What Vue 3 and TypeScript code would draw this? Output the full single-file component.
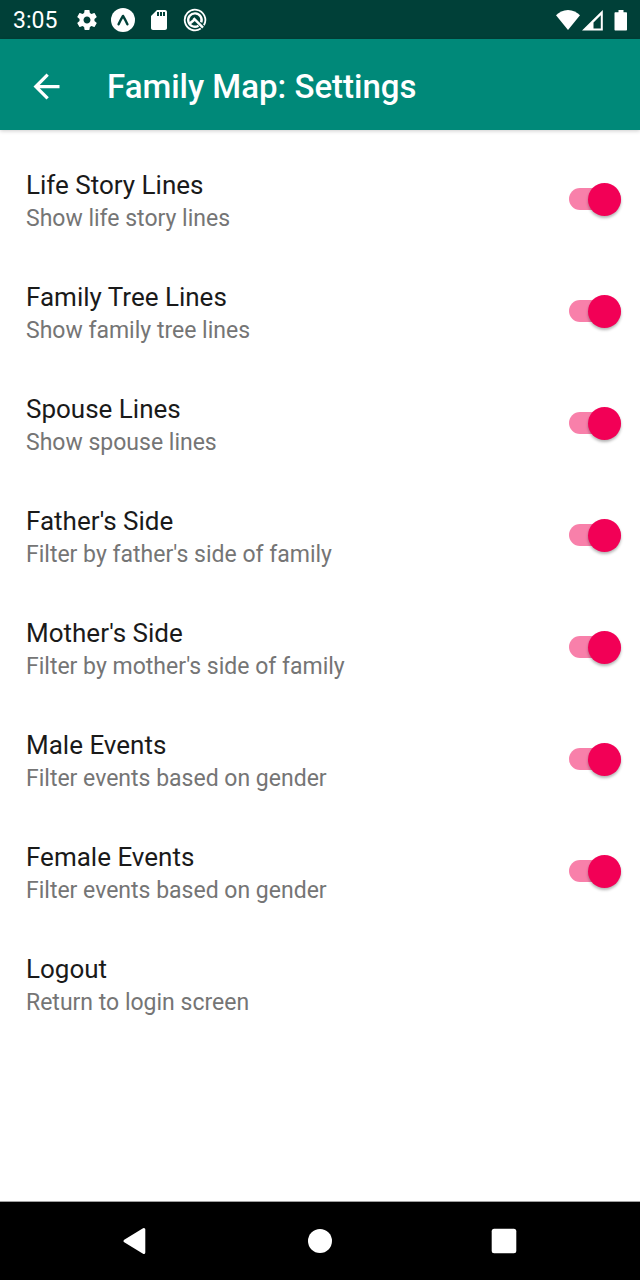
<script setup lang="ts">
import { ref } from 'vue'

interface Preference {
  id: string
  title: string
  summary: string
  enabled: boolean
}

const preferences = ref<Preference[]>([
  { id: 'life-story', title: 'Life Story Lines', summary: 'Show life story lines', enabled: true },
  { id: 'family-tree', title: 'Family Tree Lines', summary: 'Show family tree lines', enabled: true },
  { id: 'spouse', title: 'Spouse Lines', summary: 'Show spouse lines', enabled: true },
  { id: 'father', title: "Father's Side", summary: "Filter by father's side of family", enabled: true },
  { id: 'mother', title: "Mother's Side", summary: "Filter by mother's side of family", enabled: true },
  { id: 'male', title: 'Male Events', summary: 'Filter events based on gender', enabled: true },
  { id: 'female', title: 'Female Events', summary: 'Filter events based on gender', enabled: true },
])
</script>

<template>
  <div class="screen">
    <div class="status-bar">
      <span class="clock">3:05</span>
      <div class="status-icons">
        <svg width="24" height="24" viewBox="0 0 24 24" aria-hidden="true">
          <path fill="#fff" d="M19.43 12.98c.04-.32.07-.64.07-.98s-.03-.66-.07-.98l2.11-1.65c.19-.15.24-.42.12-.64l-2-3.46c-.12-.22-.39-.3-.61-.22l-2.49 1c-.52-.4-1.08-.73-1.69-.98l-.38-2.65C14.46 2.18 14.25 2 14 2h-4c-.25 0-.46.18-.49.42l-.38 2.65c-.61.25-1.17.59-1.69.98l-2.49-1c-.23-.09-.49 0-.61.22l-2 3.46c-.13.22-.07.49.12.64l2.11 1.65c-.04.32-.07.65-.07.98s.03.66.07.98l-2.11 1.65c-.19.15-.24.42-.12.64l2 3.46c.12.22.39.3.61.22l2.49-1c.52.4 1.08.73 1.69.98l.38 2.65c.03.24.24.42.49.42h4c.25 0 .46-.18.49-.42l.38-2.65c.61-.25 1.17-.59 1.69-.98l2.49 1c.23.09.49 0 .61-.22l2-3.46c.12-.22.07-.49-.12-.64l-2.11-1.65zM12 15.5c-1.93 0-3.5-1.57-3.5-3.5s1.57-3.5 3.5-3.5 3.5 1.57 3.5 3.5-1.57 3.5-3.5 3.5z" />
        </svg>
        <svg width="24" height="24" viewBox="0 0 24 24" aria-hidden="true">
          <circle cx="12" cy="12" r="12" fill="#fff" />
          <path fill="none" stroke="#004038" stroke-width="2.400" stroke-linecap="round" stroke-linejoin="round" d="M7.600 16.300C9 13.200 10.500 10.400 12 7.900c1.500 2.500 3 5.300 4.400 8.400" />
        </svg>
        <svg width="24" height="24" viewBox="0 0 24 24" aria-hidden="true">
          <path fill="#fff" d="M18 2h-8L4.020 8 4 20c0 1.100.9 2 2 2h12c1.100 0 2-.9 2-2V4c0-1.100-.9-2-2-2zm-6 6h-2V4h2v4zm3 0h-2V4h2v4zm3 0h-2V4h2v4z" />
        </svg>
        <svg width="24" height="24" viewBox="0 0 24 24" fill="none" stroke="#fff" aria-hidden="true">
          <path stroke-width="1.800" d="M17.800 20.500A10.300 10.300 0 1 1 20.900 17.200" />
          <path stroke-width="2.400" d="M15.500 17.700A6.700 6.700 0 1 1 18.200 14.400" />
          <path stroke-width="2.400" d="M10.500 10.200L20 19.600" />
          <path stroke-width="2.600" d="M6.800 15.500L11.600 11.600" />
        </svg>
      </div>
      <div class="signal-icons">
        <svg width="24" height="24" viewBox="0 0 24 24" aria-hidden="true">
          <path fill="#fff" d="M12 22L0 7.200C3 4.300 7.200 2 12 2s9 2.300 12 5.200z" />
        </svg>
        <svg class="cell" width="22" height="24" viewBox="0 0 22 24" aria-hidden="true">
          <path fill="#fff" fill-rule="evenodd" d="M0 22.500L20.800 2v20.500zM11.500 20.500h7.300V7.200L11.500 14.500z" />
        </svg>
        <svg width="14" height="24" viewBox="0 0 14 24" aria-hidden="true">
          <path fill="#fff" d="M4.500 2h5v2.200H12c.6 0 1 .4 1 1v16.300c0 .6-.4 1-1 1H1.500c-.6 0-1-.4-1-1V5.200c0-.6.4-1 1-1h3z" />
        </svg>
      </div>
    </div>

    <header class="app-bar">
      <button class="back" type="button" aria-label="Navigate up">
        <svg width="39" height="39" viewBox="0 0 24 24" aria-hidden="true">
          <path fill="#fff" d="M20 11H7.830l5.590-5.590L12 4l-8 8 8 8 1.410-1.410L7.830 13H20v-2z" />
        </svg>
      </button>
      <h1>Family Map: Settings</h1>
    </header>

    <main class="preferences">
      <label v-for="item in preferences" :key="item.id" class="row" :for="item.id">
        <span class="labels">
          <span class="title">{{ item.title }}</span>
          <span class="summary">{{ item.summary }}</span>
        </span>
        <input :id="item.id" v-model="item.enabled" class="switch" type="checkbox" role="switch" />
      </label>
      <button class="row" type="button">
        <span class="labels">
          <span class="title">Logout</span>
          <span class="summary">Return to login screen</span>
        </span>
      </button>
    </main>

    <nav class="nav-bar">
      <button type="button" aria-label="Back">
        <svg width="28" height="28" viewBox="0 0 28 28" aria-hidden="true">
          <path fill="#fff" stroke="#fff" stroke-width="3" stroke-linejoin="round" d="M3 14L21.800 2.600v22.800z" />
        </svg>
      </button>
      <button type="button" aria-label="Home">
        <svg width="28" height="28" viewBox="0 0 28 28" aria-hidden="true">
          <circle cx="14" cy="14" r="12" fill="#fff" />
        </svg>
      </button>
      <button type="button" aria-label="Overview">
        <svg width="28" height="28" viewBox="0 0 28 28" aria-hidden="true">
          <rect x="1.700" y="1.700" width="24.600" height="24.600" rx="2.500" fill="#fff" />
        </svg>
      </button>
    </nav>
  </div>
</template>

<style>
body {
  margin: 0;
  background: #fff;
}
</style>

<style scoped>
.screen {
  display: flex;
  flex-direction: column;
  min-height: 100vh;
  font-family: Roboto, "Liberation Sans", sans-serif;
  color: #1a1a1a;
  background: #fff;
}

button {
  margin: 0;
  padding: 0;
  border: 0;
  background: none;
  font: inherit;
  color: inherit;
  text-align: left;
  cursor: pointer;
}

svg {
  display: block;
  flex: none;
}

.status-bar {
  display: flex;
  align-items: center;
  height: 39px;
  padding: 0 12px 0 13px;
  background: #004038;
  color: #fff;
}

.clock {
  width: 62px;
  padding-top: 2px;
  font-size: 23px;
  line-height: 37px;
}

.status-icons {
  display: flex;
  gap: 12px;
}

.signal-icons {
  display: flex;
  gap: 2px;
  margin-left: auto;
}

.cell {
  margin-right: 8px;
}

.app-bar {
  display: flex;
  align-items: center;
  gap: 41px;
  height: 91px;
  padding: 4px 27px 0;
  box-sizing: border-box;
  background: #008979;
  color: #fff;
  box-shadow: 0 1px 4px rgba(0, 0, 0, 0.2);
}

h1 {
  margin: 0;
  font-size: 33px;
  font-weight: 500;
  line-height: 42px;
}

.preferences {
  display: flex;
  flex: 1;
  flex-direction: column;
  padding: 13px 0;
}

.row {
  display: flex;
  align-items: center;
  justify-content: space-between;
  height: 112px;
  padding: 0 19px 0 26px;
  cursor: pointer;
}

.labels {
  display: flex;
  flex-direction: column;
  gap: 1px;
  padding-top: 7px;
}

.title {
  font-size: 26px;
  line-height: 32px;
}

.summary {
  font-size: 23px;
  line-height: 34px;
  color: #757575;
}

.switch {
  appearance: none;
  display: flex;
  align-items: center;
  flex: none;
  width: 52px;
  height: 22px;
  margin: 0;
  background: #b9b9b9;
  border-radius: 11px;
  cursor: pointer;
}

.switch::before {
  content: "";
  flex: none;
  width: 33px;
  height: 33px;
  border-radius: 50%;
  background: #fafafa;
  box-shadow: 0 2px 3px rgba(0, 0, 0, 0.3);
}

.switch:checked {
  justify-content: flex-end;
  background: #f880aa;
}

.switch:checked::before {
  background: #f20056;
}

.nav-bar {
  display: flex;
  align-items: center;
  justify-content: center;
  gap: 156px;
  height: 78px;
  border-top: 1px solid #a0a0a0;
  background: #000;
}
</style>
